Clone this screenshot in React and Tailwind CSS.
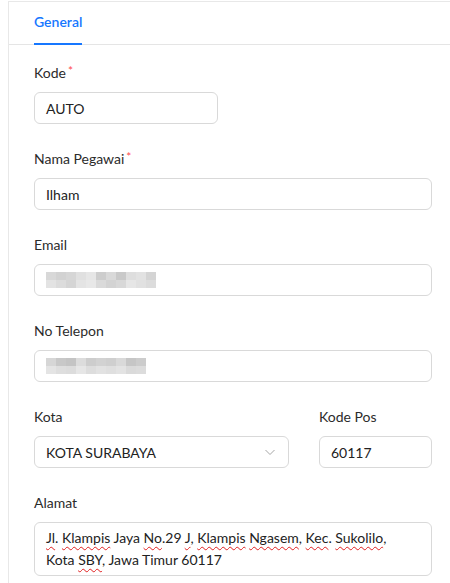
import React from "react";

const font = { fontFamily: "Lato, 'Noto Sans', sans-serif" };

function Label({ children, required }) {
  return (
    <div className="h-[22px] mb-2 text-[14px] leading-[22px] text-[#2b2b2b]">
      {children}
      {required && <span className="relative -top-[3px] ml-[2px] text-[#ff4d4f] text-[12px]">*</span>}
    </div>
  );
}

function Input({ children, className = "" }) {
  return (
    <div className={`h-8 rounded-md border border-[#d9d9d9] bg-white px-[11px] flex items-center text-[14px] text-[#222] ${className}`}>
      {children}
    </div>
  );
}

const emailTiles = [
  ["#d8d8d8", "#d2d2d2", "#d6d6d6", "#e0e0e0", "#e6e6e6", "#cdcdcd", "#d9d9d9", "#c9c9c9", "#dedede", "#e2e2e2", "#d4d4d4"],
  ["#e3e3e3", "#dcdcdc", "#d5d5d5", "#e4e4e4", "#e8e8e8", "#dadada", "#d3d3d3", "#d8d8d8", "#e6e6e6", "#e1e1e1", "#dcdcdc"],
];
const phoneTiles = [
  ["#d6d6d6", "#c8c8c8", "#c4c4c4", "#dcdcdc", "#cdcdcd", "#d2d2d2", "#cfcfcf", "#d9d9d9", "#c6c6c6", "#cccccc"],
  ["#e4e4e4", "#dedede", "#dcdcdc", "#e6e6e6", "#dddddd", "#e2e2e2", "#dfdfdf", "#e3e3e3", "#dadada", "#dcdcdc"],
];

function Blur({ tiles }) {
  return (
    <div className="flex flex-col">
      {tiles.map((row, i) => (
        <div key={i} className="flex">
          {row.map((c, j) => (
            <div key={j} className="w-[10px] h-[8px]" style={{ background: c }} />
          ))}
        </div>
      ))}
    </div>
  );
}

const W = ({ children }) => (
  <span className="underline decoration-wavy decoration-[#e02020] decoration-1 underline-offset-[3px]">{children}</span>
);

export default function App() {
  return (
    <div className="w-[450px] h-[583px] bg-white overflow-hidden pt-px pl-2" style={font}>
      <div className="h-full border-l border-t border-[#e8e8e8]">
        <div className="h-[43px] border-b border-[#e5e5e5] pl-[25px] flex">
          <div className="relative h-full flex items-center pb-[3px] text-[14px] font-semibold text-[#1677ff]">
            General
            <div className="absolute left-0 right-0 -bottom-px h-[2px] bg-[#1677ff]" />
          </div>
        </div>
        <div className="pl-[25px] pr-[18px] pt-[17px] flex flex-col gap-6">
          <div>
            <Label required>Kode</Label>
            <Input className="w-[184px]">AUTO</Input>
          </div>
          <div>
            <Label required>Nama Pegawai</Label>
            <Input>Ilham</Input>
          </div>
          <div>
            <Label>Email</Label>
            <Input><Blur tiles={emailTiles} /></Input>
          </div>
          <div>
            <Label>No Telepon</Label>
            <Input><Blur tiles={phoneTiles} /></Input>
          </div>
          <div className="grid grid-cols-[255px_113px] gap-[30px]">
            <div>
              <Label>Kota</Label>
              <Input className="justify-between">
                <span>KOTA SURABAYA</span>
                <svg width="12" height="12" viewBox="0 0 12 12" className="mr-[1px]">
                  <polyline points="1.5,4 6,8.5 10.5,4" fill="none" stroke="#a6a6a6" strokeWidth="1" />
                </svg>
              </Input>
            </div>
            <div>
              <Label>Kode Pos</Label>
              <Input>60117</Input>
            </div>
          </div>
          <div>
            <Label>Alamat</Label>
            <div className="rounded-md border border-[#d9d9d9] px-[11px] py-1 text-[14px] leading-[22px] text-[#222]">
              <W>Jl</W>. <W>Klampis</W> Jaya <W>No</W>.29 <W>J</W>, <W>Klampis</W> <W>Ngasem</W>, <W>Kec</W>. <W>Sukolilo</W>,
              <br />
              Kota <W>SBY</W>, Jawa Timur 60117
            </div>
          </div>
        </div>
      </div>
    </div>
  );
}
